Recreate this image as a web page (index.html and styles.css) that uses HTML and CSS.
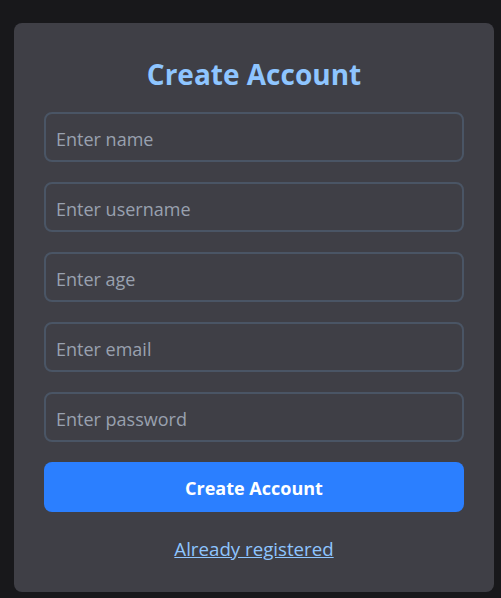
FILE: index.html
```html
<!DOCTYPE html>
<html>
<head>
<meta charset="utf-8">
<link rel="stylesheet" href="styles.css">
</head>
<body>
<div class="card">
  <h1 class="title">Create Account</h1>
  <form class="form">
    <input class="field" type="text" placeholder="Enter name">
    <input class="field" type="text" placeholder="Enter username">
    <input class="field" type="text" placeholder="Enter age">
    <input class="field" type="text" placeholder="Enter email">
    <input class="field" type="password" placeholder="Enter password">
    <button class="btn" type="button">Create Account</button>
  </form>
  <div class="foot"><a class="link" href="#">Already registered</a></div>
</div>
</body>
</html>
```

FILE: styles.css
```css
html, body {
  margin: 0;
  padding: 0;
  background: #18181b;
  font-family: "Open Sans", "Noto Sans", sans-serif;
}
body {
  padding: 23px 0 0 14px;
}
.card {
  width: 480px;
  box-sizing: border-box;
  background: #3f3f46;
  border-radius: 8px;
  padding: 31px 30px 28px;
}
.title {
  margin: 0 0 17px;
  text-align: center;
  color: #8ec5ff;
  font-size: 28px;
  font-weight: 700;
  line-height: 41px;
}
.form {
  display: flex;
  flex-direction: column;
  gap: 20px;
}
.field {
  height: 50px;
  box-sizing: border-box;
  border: 2px solid #4a5565;
  border-radius: 8px;
  background: transparent;
  padding: 3px 10px 0;
  font-family: inherit;
  font-size: 18px;
  color: #e5e7eb;
  outline: none;
}
.field::placeholder {
  color: #99a1af;
}
.btn {
  height: 50px;
  border: none;
  border-radius: 8px;
  background: #2b7fff;
  color: #fff;
  padding: 2px 0 0;
  font-family: inherit;
  font-size: 18px;
  font-weight: 700;
}
.foot {
  text-align: center;
  margin-top: 23px;
  line-height: 28px;
}
.link {
  color: #8ec5ff;
  font-size: 18.7px;
  text-decoration: underline;
}
```
